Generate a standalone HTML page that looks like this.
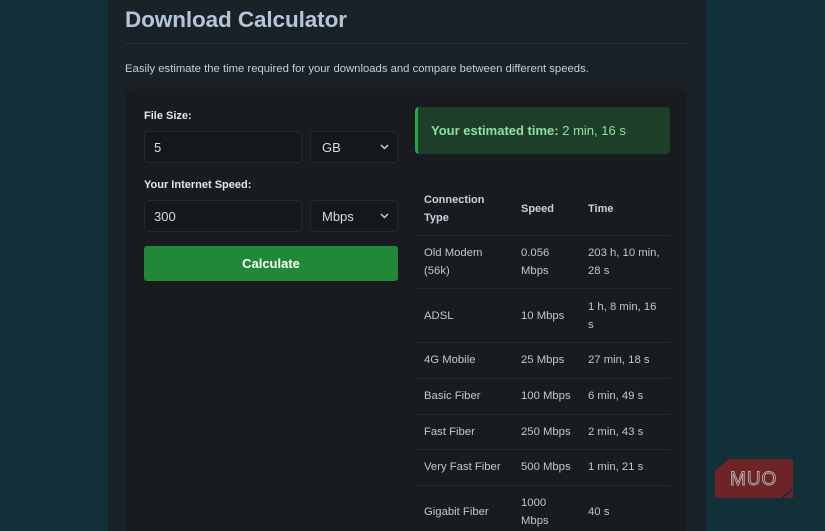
<!DOCTYPE html>
<html><head><style>
*{margin:0;padding:0;box-sizing:border-box}
html,body{width:825px;height:531px;overflow:hidden}
body{background:#11303a;font-family:"Liberation Sans",sans-serif;position:relative}
.panel{position:absolute;left:108px;top:0;width:598px;height:531px;background:#1a2127}
.a{position:absolute}
h1{position:absolute;left:125px;top:7px;font-size:22.5px;font-weight:bold;color:#b4c6d8;font-family:"Liberation Sans",sans-serif;letter-spacing:-0.1px}
.hr{left:125px;top:43px;width:562px;height:1px;background:#283036}
.desc{left:125px;top:63px;font-size:11.3px;color:#c6cdd4}
.card{left:126px;top:89px;width:561px;height:442px;background:#181b1f;border-radius:6px 6px 0 0}
.lbl{font-size:11px;font-weight:bold;color:#e6e8ea}
.inp{background:#15181b;border:1px solid #252a2f;border-radius:4px;font-size:13px;color:#d8dadc;padding-left:9px;display:flex;align-items:center}
.sel{justify-content:space-between;padding-left:11px;padding-right:8px}
.btn{left:144px;top:246px;width:254px;height:35px;background:#218838;border-radius:3px;color:#fff;font-weight:bold;font-size:13px;display:flex;align-items:center;justify-content:center}
.est{left:415px;top:107px;width:255px;height:47px;background:#1d3f2a;border-left:3px solid #28a745;border-radius:4px;color:#8fe0a0;font-size:13px;padding-left:13px;display:flex;align-items:center}
.t{font-size:11.3px;color:#c2c8ce;line-height:18px}
.th{font-weight:bold;color:#c8d2dc;font-size:11px}
.ln{left:415px;width:255px;height:1px;background:#262b30}
</style></head><body>
<div class="panel"></div>
<h1>Download Calculator</h1>
<div class="a hr"></div>
<div class="a desc">Easily estimate the time required for your downloads and compare between different speeds.</div>
<div class="a card"></div>
<div class="a lbl" style="left:144px;top:110px">File Size:</div>
<div class="a inp" style="left:144px;top:131px;width:158px;height:32px">5</div>
<div class="a inp sel" style="left:310px;top:131px;width:88px;height:32px"><span>GB</span><svg width="9" height="6" viewBox="0 0 9 6"><path d="M1 1l3.5 3.5L8 1" stroke="#ccc" stroke-width="1.5" fill="none"/></svg></div>
<div class="a lbl" style="left:144px;top:179px">Your Internet Speed:</div>
<div class="a inp" style="left:144px;top:200px;width:158px;height:32px">300</div>
<div class="a inp sel" style="left:310px;top:200px;width:88px;height:32px"><span>Mbps</span><svg width="9" height="6" viewBox="0 0 9 6"><path d="M1 1l3.5 3.5L8 1" stroke="#ccc" stroke-width="1.5" fill="none"/></svg></div>
<div class="a btn">Calculate</div>
<div class="a est"><b>Your estimated time:</b>&nbsp;2 min, 16 s</div>

<div class="a t th" style="left:424px;top:191px">Connection<br>Type</div>
<div class="a t th" style="left:521px;top:200px">Speed</div>
<div class="a t th" style="left:588px;top:200px">Time</div>
<div class="a ln" style="top:235px"></div>
<div class="a t" style="left:424px;top:244px">Old Modem<br>(56k)</div>
<div class="a t" style="left:521px;top:244px">0.056<br>Mbps</div>
<div class="a t" style="left:588px;top:244px">203 h, 10 min,<br>28 s</div>
<div class="a ln" style="top:288px"></div>
<div class="a t" style="left:424px;top:307px">ADSL</div>
<div class="a t" style="left:521px;top:307px">10 Mbps</div>
<div class="a t" style="left:588px;top:298px">1 h, 8 min, 16<br>s</div>
<div class="a ln" style="top:342px"></div>
<div class="a t" style="left:424px;top:351px">4G Mobile</div>
<div class="a t" style="left:521px;top:351px">25 Mbps</div>
<div class="a t" style="left:588px;top:351px">27 min, 18 s</div>
<div class="a ln" style="top:378px"></div>
<div class="a t" style="left:424px;top:387px">Basic Fiber</div>
<div class="a t" style="left:521px;top:387px">100 Mbps</div>
<div class="a t" style="left:588px;top:387px">6 min, 49 s</div>
<div class="a ln" style="top:414px"></div>
<div class="a t" style="left:424px;top:423px">Fast Fiber</div>
<div class="a t" style="left:521px;top:423px">250 Mbps</div>
<div class="a t" style="left:588px;top:423px">2 min, 43 s</div>
<div class="a ln" style="top:449px"></div>
<div class="a t" style="left:424px;top:458px">Very Fast Fiber</div>
<div class="a t" style="left:521px;top:458px">500 Mbps</div>
<div class="a t" style="left:588px;top:458px">1 min, 21 s</div>
<div class="a ln" style="top:485px"></div>
<div class="a t" style="left:424px;top:503px">Gigabit Fiber</div>
<div class="a t" style="left:521px;top:494px">1000<br>Mbps</div>
<div class="a t" style="left:588px;top:503px">40 s</div>

<svg class="a" style="left:715px;top:459px" width="79" height="40" viewBox="0 0 79 40">
<polygon points="14,0 78,0 78,28 66,39 0,39 0,12" fill="#6e2326"/>
<polygon points="78,30 78,39 69,39" fill="#6e2326"/>
<text x="15" y="26" font-family="Liberation Sans,sans-serif" font-size="19" fill="none" stroke="#b0b0b0" stroke-width="0.9" letter-spacing="1">MUO</text>
</svg>
</body></html>
